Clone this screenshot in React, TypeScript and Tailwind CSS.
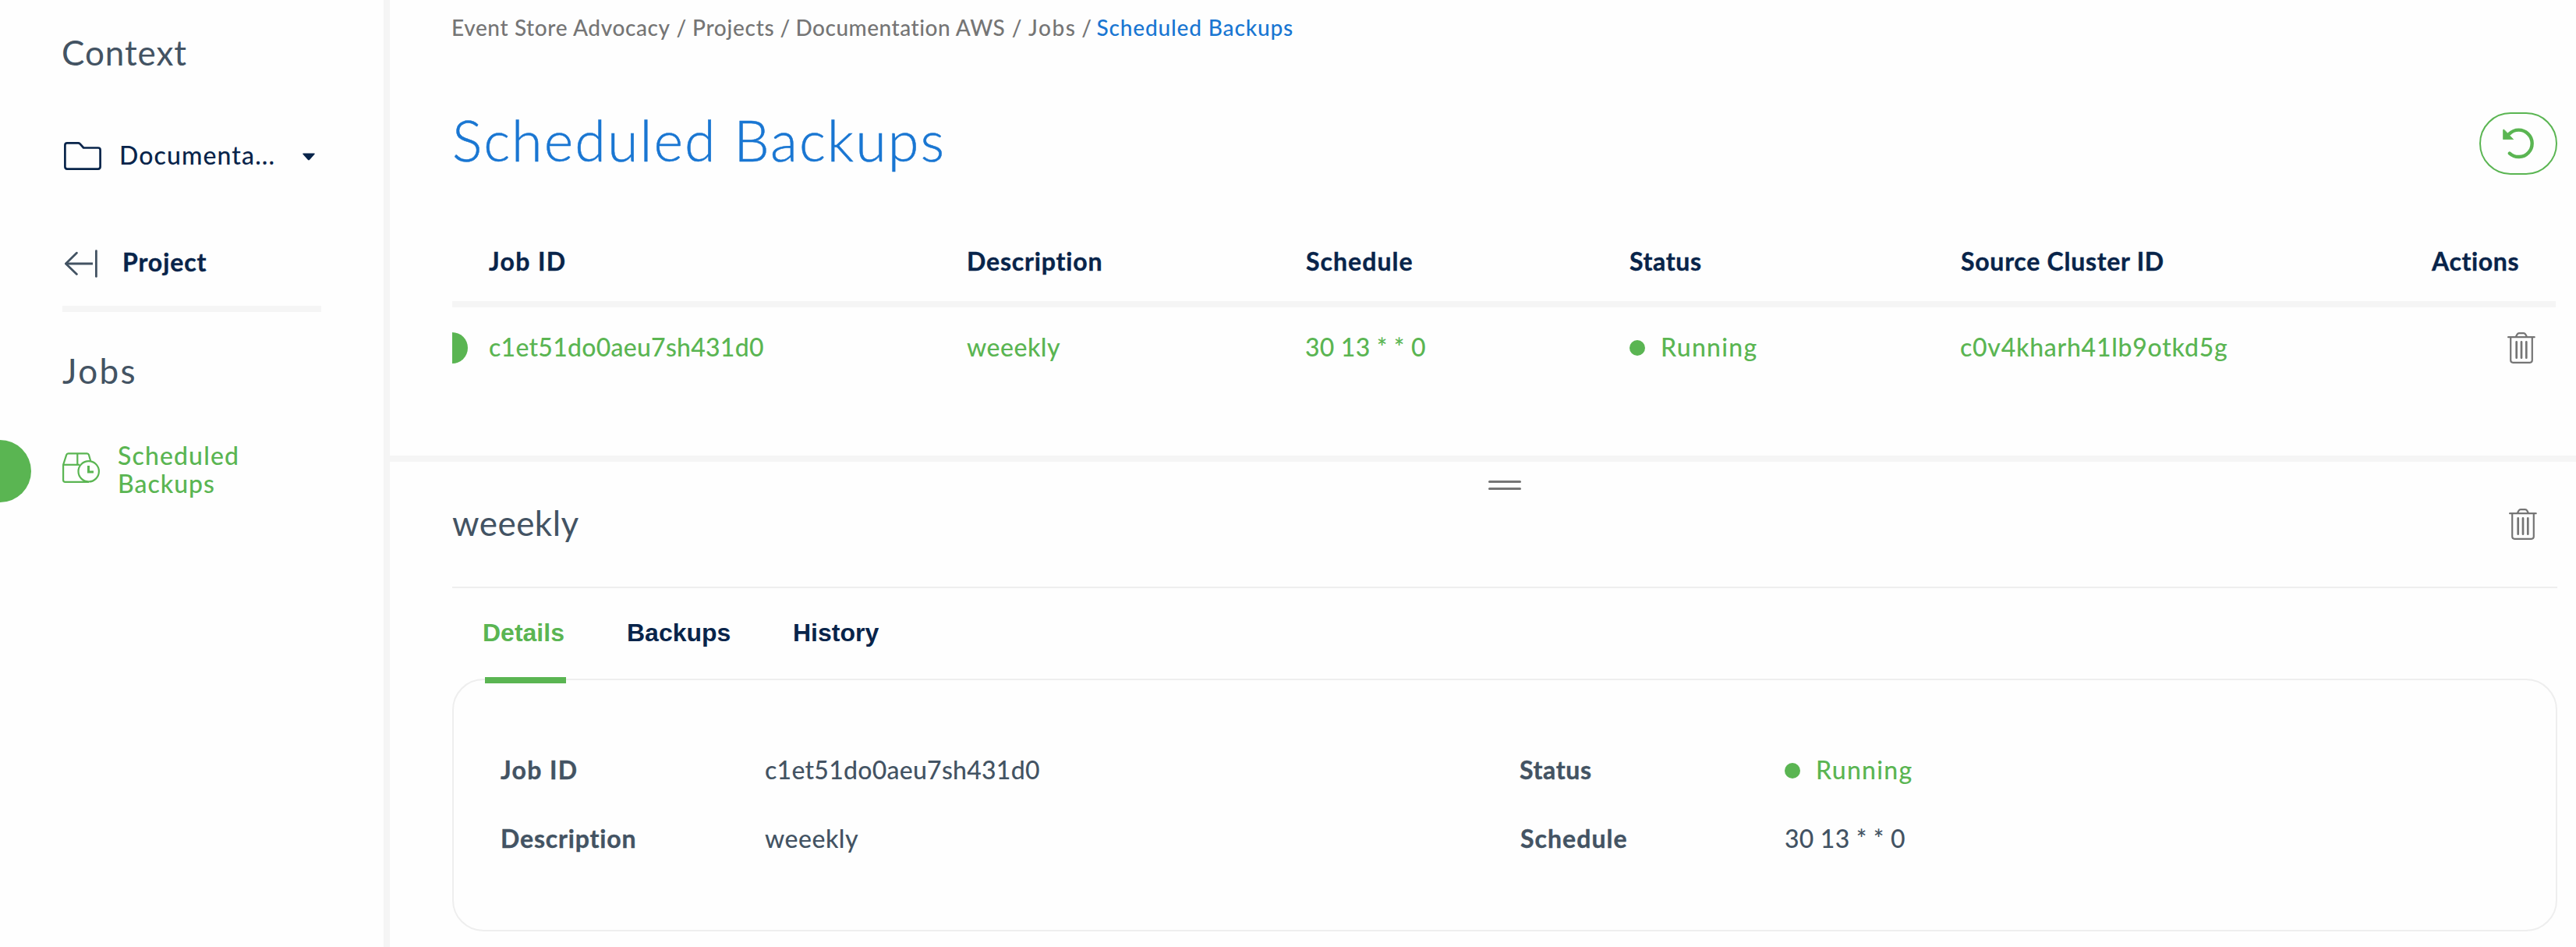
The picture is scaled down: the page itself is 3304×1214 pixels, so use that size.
import React from "react";

function FolderIcon() {
  return (
    <svg className="ml-0.5 mt-1 h-9 w-12 shrink-0" viewBox="0 0 48 36" fill="none" stroke="currentColor" strokeWidth="2.7" strokeLinejoin="round">
      <path d="M4.2 1.4H18.2Q19.6 1.4 20.6 2.4L25.2 7.5H43.8Q46.6 7.5 46.6 10.3V31.8Q46.6 34.6 43.8 34.6H4.2Q1.4 34.6 1.4 31.8V4.2Q1.4 1.4 4.2 1.4Z" />
    </svg>
  );
}

function BackIcon() {
  return (
    <svg className="ml-[3px] mt-1 h-9 w-[42px] shrink-0 text-[#435363]" viewBox="0 0 42 36" fill="none" stroke="currentColor" strokeWidth="2.8" strokeLinecap="round" strokeLinejoin="round">
      <path d="M15.4 4.2L1.4 18L15.4 31.4" />
      <path d="M1.4 18H36" strokeLinecap="butt" />
      <path d="M40.4 1.6V34.4" />
    </svg>
  );
}

function BackupIcon() {
  return (
    <svg className="mt-4 h-10 w-12 shrink-0" viewBox="0 0 48 40" fill="none" stroke="currentColor" strokeWidth="2.2" strokeLinejoin="round">
      <path d="M34 37.9H3.6Q1.1 37.9 1.1 35.4V15.8L5.2 3.2Q5.8 1.4 7.6 1.4H31.6Q33.4 1.4 34 3.2L36.2 11" />
      <path d="M1.1 15.8H22.2" />
      <path d="M19.3 1.4V15.8" />
      <circle cx="33.7" cy="24.3" r="13.2" />
      <path d="M33.5 17V25H40" strokeWidth="3" strokeLinejoin="miter" />
    </svg>
  );
}

function TrashIcon({ className }: { className: string }) {
  return (
    <svg className={"h-10 w-9 shrink-0 text-[#757575] " + className} viewBox="0 0 36 40" fill="none" stroke="currentColor" strokeWidth="2.2" strokeLinecap="round" strokeLinejoin="round">
      <path d="M1.1 6.2H34.7" />
      <path d="M10.8 5.8L12.6 2.6Q13.4 1.2 15 1.2H20.8Q22.4 1.2 23.2 2.6L25 5.8" />
      <path d="M4.2 6.2V35.8Q4.2 38.8 7.2 38.8H28.8Q31.8 38.8 31.8 35.8V6.2" />
      <path d="M11.7 12.3V32.7M18 12.3V32.7M24.3 12.3V32.7" strokeWidth="2.7" />
    </svg>
  );
}

function RefreshIcon() {
  return (
    <svg className="h-10 w-10" viewBox="0 0 40 40" fill="none">
      <path d="M8.9 32.6A17.2 17.2 0 1 0 8.4 7.6" stroke="currentColor" strokeWidth="4.4" strokeLinecap="round" />
      <path d="M0.6 2.6Q1 1.4 2 2.4L13.6 14.6H0.6Z" fill="currentColor" stroke="currentColor" strokeWidth="0.8" strokeLinejoin="round" />
    </svg>
  );
}

function Crumb({ label, className }: { label: string; className: string }) {
  return (
    <span className={"flex shrink-0 " + className}>
      <span>{label}</span>
      <span className="flex-1 text-center tracking-normal">/</span>
    </span>
  );
}

function Sidebar() {
  return (
    <aside className="flex w-[500px] shrink-0 flex-col border-r-8 border-[#f5f5f5] px-20 pt-[41px]">
      <h2 className="-ml-px text-[44px] leading-[52px] tracking-[0.94px] text-[#435363]">Context</h2>
      <div className="mt-[85px] flex h-10 text-[32px] font-medium leading-10 text-[#08244a]">
        <FolderIcon />
        <span className="ml-[23px] w-[235px] pt-px tracking-[1.11px]">Documenta...</span>
        <svg className="mt-[18px] h-[10px] w-4" viewBox="0 0 16 10" fill="currentColor">
          <path d="M1 0.6H15Q16.2 0.8 15.5 1.8L9 9Q8 9.8 7 9L0.5 1.8Q-0.2 0.8 1 0.6Z" />
        </svg>
      </div>
      <div className="mt-[98px] flex h-[84px] border-b-8 border-[#f5f5f5] text-[32px] font-bold leading-10 text-[#08244a]">
        <BackIcon />
        <span className="ml-8 tracking-[0.91px] [-webkit-text-stroke:0.4px]">Project</span>
      </div>
      <h2 className="mt-[49px] text-[44px] leading-[52px] tracking-[2.4px] text-[#435363]">Jobs</h2>
      <div className="-ml-20 mt-[63px] flex h-20 text-[#5ab552]">
        <span className="mr-10 h-20 w-10 shrink-0 rounded-r-full bg-[#5ab552]" />
        <BackupIcon />
        <span className="ml-6 mt-0.5 flex flex-col text-[32px] font-medium leading-9">
          <span className="-ml-px tracking-[1.13px]">Scheduled</span>
          <span className="-ml-px tracking-[0.97px]">Backups</span>
        </span>
      </div>
    </aside>
  );
}

function JobsTable() {
  return (
    <div className="w-[2698px]">
      <div className="grid h-[170px] grid-cols-[614px_434px_415px_425px_604px_1fr] border-b-8 border-[#f5f5f5] pl-[46px] pt-[91px] text-[32px] font-bold leading-10 text-[#08244a] [-webkit-text-stroke:0.4px]">
        <span className="ml-px tracking-[1.34px]">Job ID</span>
        <span className="tracking-[0.84px]">Description</span>
        <span className="ml-px tracking-[1.04px]">Schedule</span>
        <span className="ml-px tracking-[0.66px]">Status</span>
        <span className="ml-px tracking-[0.74px]">Source Cluster ID</span>
        <span className="ml-px tracking-[0.63px]">Actions</span>
      </div>
      <div className="flex h-[104px] text-[32px] font-medium leading-10 text-[#5ab552]">
        <span className="mr-[26px] mt-8 h-10 w-5 shrink-0 rounded-r-full bg-[#5ab552]" />
        <div className="grid flex-1 grid-cols-[614px_434px_415px_425px_604px_1fr] pt-[31px]">
          <span className="ml-px tracking-[0.26px]">c1et51do0aeu7sh431d0</span>
          <span className="tracking-[0.51px]">weeekly</span>
          <span className="tracking-[0.22px]">30 13 * * 0</span>
          <span className="ml-px flex gap-5">
            <span className="mt-[11px] h-5 w-5 rounded-full bg-[#5ab552]" />
            <span className="tracking-[1.25px]">Running</span>
          </span>
          <span className="tracking-[0.73px]">c0v4kharh41lb9otkd5g</span>
          <TrashIcon className="ml-[98px] mt-px" />
        </div>
      </div>
    </div>
  );
}

function DetailPane() {
  return (
    <section className="flex h-[630px] flex-col border-t-8 border-[#f5f5f5] pl-20 pr-6 pt-6">
      <div className="flex h-3 w-[42px] flex-col justify-between self-center">
        <span className="h-[3px] rounded-full bg-[#757575]" />
        <span className="h-[3px] rounded-full bg-[#757575]" />
      </div>
      <header className="mt-[15px] flex h-[111px] justify-between border-b-2 border-[#eeeeee]">
        <h2 className="pt-px text-[44px] leading-[52px] tracking-[0.47px] text-[#435363]">weeekly</h2>
        <TrashIcon className="mr-[26px] mt-[9px]" />
      </header>
      <nav className="flex h-[116px] pl-[39px] pt-[37px] font-['Liberation_Sans',sans-serif] text-[32px] font-bold leading-10 text-[#08244a]">
        <span className="relative w-[185px] text-[#5ab552]">
          Details
          <span className="absolute left-[3px] top-[77px] h-2 w-[104px] bg-[#5ab552]" />
        </span>
        <span className="w-[213px]">Backups</span>
        <span>History</span>
      </nav>
      <div className="grid h-[324px] grid-cols-[339px_969px_339px_1fr] content-start rounded-[40px] border-2 border-[#eeeeee] pl-[60px] pt-[95px] text-[32px] font-medium leading-10 text-[#435363]">
        <span className="h-[88px] font-bold tracking-[1.34px] [-webkit-text-stroke:0.4px]">Job ID</span>
        <span className="tracking-[0.26px]">c1et51do0aeu7sh431d0</span>
        <span className="-ml-px font-bold tracking-[0.66px] [-webkit-text-stroke:0.4px]">Status</span>
        <span className="flex gap-5 text-[#5ab552]">
          <span className="mt-[11px] h-5 w-5 rounded-full bg-[#5ab552]" />
          <span className="tracking-[1.25px]">Running</span>
        </span>
        <span className="font-bold tracking-[0.84px] [-webkit-text-stroke:0.4px]">Description</span>
        <span className="tracking-[0.51px]">weeekly</span>
        <span className="font-bold tracking-[1.04px] [-webkit-text-stroke:0.4px]">Schedule</span>
        <span className="tracking-[0.22px]">30 13 * * 0</span>
      </div>
    </section>
  );
}

export default function App() {
  return (
    <div className="flex h-[1214px] w-[3304px] overflow-hidden bg-[#fefefe] font-['Lato',sans-serif]">
      <Sidebar />
      <main className="flex flex-1 flex-col">
        <section className="h-[584px] pl-20 pr-6 pt-[15px]">
          <nav className="-ml-px flex h-10 text-[28px] font-medium leading-10 text-[#757575]">
            <Crumb label="Event Store Advocacy" className="w-[309px] tracking-[0.62px]" />
            <Crumb label="Projects" className="w-[132.5px] tracking-[0.71px]" />
            <Crumb label="Documentation AWS" className="w-[298.5px] tracking-[0.51px]" />
            <Crumb label="Jobs" className="w-[87.5px] tracking-[1.6px]" />
            <span className="tracking-[0.85px] text-[#1976d2]">Scheduled Backups</span>
          </nav>
          <header className="mt-[83px] flex h-[86px] justify-between text-[#1976d2]">
            <h1 className="pt-px text-[72px] font-light leading-[80px] tracking-[2px] [-webkit-text-stroke:0.5px]">Scheduled Backups</h1>
            <button className="flex h-20 w-[100px] items-center justify-center self-end rounded-[40px] border-2 border-[#5ab552] text-[#5ab552]">
              <RefreshIcon />
            </button>
          </header>
          <JobsTable />
        </section>
        <DetailPane />
      </main>
    </div>
  );
}
